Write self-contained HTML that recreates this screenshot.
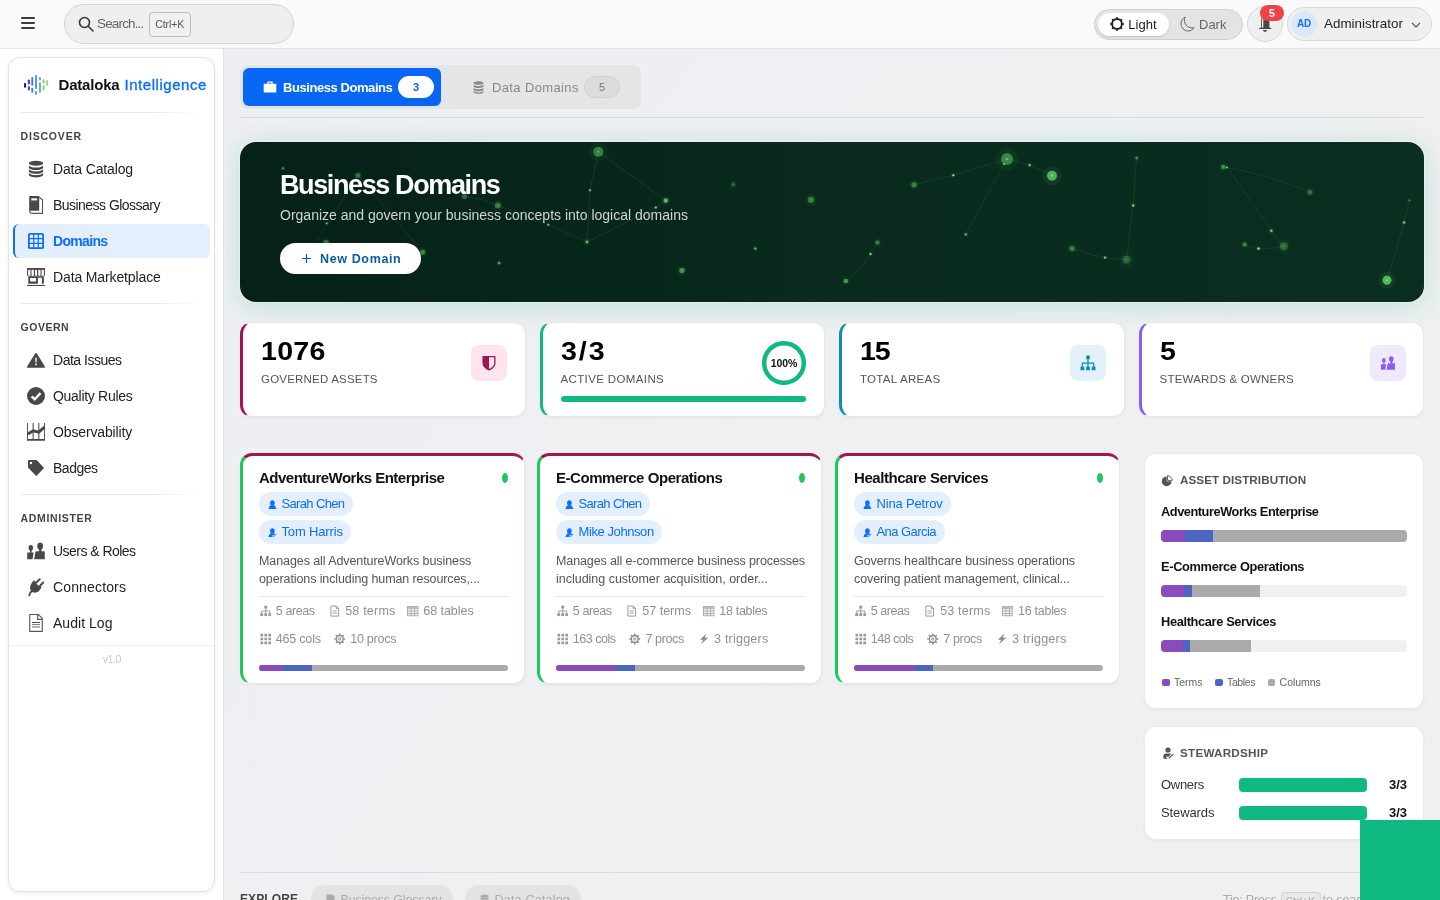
<!DOCTYPE html>
<html lang="en">
<head>
<meta charset="utf-8">
<title>Dataloka Intelligence - Domains</title>
<style>
*{box-sizing:border-box;margin:0;padding:0}
html,body{width:1440px;height:900px;overflow:hidden}
body{font-family:"Liberation Sans",sans-serif;background:linear-gradient(125deg,#edeff2 0%,#eef0f2 62%,#f0f0f0 100%);color:#212529;position:relative;font-size:14px}
svg{display:block}
#topbar,#sidewrap,#main{will-change:transform}
.abs{position:absolute}
/* top bar */
#topbar{position:absolute;left:0;top:0;width:1440px;height:49px;background:#fafafa;border-bottom:1px solid #e3e5e8}
#burger{position:absolute;left:21px;top:16.800px;width:14px;height:14px}
#burger i{display:block;height:1.800px;background:#3c3c3c;margin-bottom:3.200px;border-radius:1px}
#search{position:absolute;left:64px;top:4px;width:230px;height:40px;border:1px solid #d3d3d3;border-radius:20px;background:#efefef}
#search .txt{position:absolute;left:32px;top:11px;color:#666;white-space:nowrap;font-size:13.5px;letter-spacing:-0.843px}
#search kbd{position:absolute;left:83.500px;top:6.600px;width:42.500px;height:25px;border:1px solid #bdbdbd;border-radius:4px;font-family:"Liberation Sans",sans-serif;color:#555;text-align:center;line-height:23px;background:#f1f1f1;font-size:10.5px;letter-spacing:-0.085px}
#theme{position:absolute;left:1094px;top:9px;width:149px;height:31px;border:1px solid #cfcfcf;border-radius:16px;background:#e4e4e4}
#theme .on{position:absolute;left:3px;top:3px;width:71px;height:23px;border-radius:12px;background:#fff;box-shadow:0 1px 2px rgba(0,0,0,.15)}
#theme span{position:absolute;top:7px;font-size:13px}
#bell{position:absolute;left:1247px;top:6px;width:36px;height:36px;border:1px solid #d6d6d6;border-radius:18px;background:#efefef}
#bell .badge{position:absolute;left:12px;top:-2.300px;width:24px;height:16.400px;border-radius:8.200px;background:#ee4344;color:#fff;font-size:10.500px;font-weight:bold;text-align:center;line-height:16.400px}
#user{position:absolute;left:1287px;top:7px;width:145px;height:34px;border:1px solid #d9d9d9;border-radius:18px;background:#efefef}
#user .av{position:absolute;left:3px;top:3px;width:26px;height:26px;border-radius:13px;background:#dbe7fb;color:#0d6efd;font-size:10px;font-weight:bold;text-align:center;line-height:26px;letter-spacing:-.3px}
#user .nm{position:absolute;left:36px;top:8px;font-size:13.4px;color:#222}
/* sidebar */
#sidewrap{position:absolute;left:0;top:49px;width:224px;height:851px;background:#fff;border-right:1px solid #e1e3e6}
#side{position:absolute;left:7.5px;top:8px;width:207px;height:835px;border:1px solid #e4e4e4;border-radius:12px;background:#fff;box-shadow:0 1px 4px rgba(0,0,0,.08)}
#side .brand{position:absolute;left:0;top:0;width:100%;height:56px}
#side .brand b{position:absolute;left:50px;top:19px;font-size:15px;color:#111;white-space:nowrap}
#side .brand b.int{left:116px;color:#0d6efd;font-weight:normal;-webkit-text-stroke:.35px #0d6efd}
#side .inner{position:absolute;left:0;top:-1px;width:100%;height:100%}
#side hr{position:absolute;left:12px;width:180px;border:0;height:1px;background:linear-gradient(90deg,#e6e6e6,#e6e6e6 70%,rgba(230,230,230,0))}
#side h6{position:absolute;left:12px;font-size:11px;letter-spacing:.8px;color:#444;font-weight:bold}
#side .it{position:absolute;left:4px;width:197px;height:34px;border-radius:6px;font-size:14px;color:#222}
#side .it span{position:absolute;left:40.5px;top:9px;white-space:nowrap}
#side .it.act span{left:38.5px}
#side .it.act svg{left:11.500px}
#side .it svg{position:absolute;left:13.500px;top:7px;width:20px;height:20px}
#side .it.act{background:#e3effd;color:#0d6efd;border-left:2px solid #0d6efd;font-weight:bold}
#side .full{position:absolute;left:0;width:100%;height:1px;background:#f0f0f0}
#side .ver{position:absolute;left:1px;width:100%;text-align:center;font-size:10px;color:#c6c6c6;letter-spacing:-.2px}
/* main */
#main{position:absolute;left:225px;top:49px;width:1215px;height:851px;overflow:hidden}

#tabs{position:absolute;left:15px;top:16px;width:401px;height:44px;background:#e3e5e7;border-radius:8px}
.tab{position:absolute;top:3px;height:38px;border-radius:6px;font-size:13px}
.tab span{position:absolute;top:12px;white-space:nowrap}
.tab.on{left:3px;width:198px;background:#0866f5;color:#fff;font-weight:bold}
.tab.off{left:203px;width:195px;color:#888}
.tab em{position:absolute;top:8px;width:36px;height:22px;border-radius:11px;font-style:normal;font-size:11px;font-weight:bold;text-align:center;line-height:22px}
.tab.on em{left:155px;background:#fff;color:#0866f5}
.tab.off em{left:141px;background:#dadcde;color:#777;border:1px solid #cfd1d3;line-height:20px;font-weight:normal}
.hline{position:absolute;left:15px;width:1184px;height:1px;background:#d9dbde}
#hero{position:absolute;left:15px;top:93px;width:1184px;height:160px;border-radius:16px;background:linear-gradient(90deg,#062118,#092a1d 50%,#0a2e1f);overflow:hidden;box-shadow:0 0 0 1px rgba(255,255,255,.35),0 4px 28px rgba(16,150,120,.2)}
#hero h1{position:absolute;left:40px;top:28.400px;font-size:27px;font-weight:bold;color:#fff;letter-spacing:-1.1px;white-space:nowrap}
#hero p{position:absolute;left:40px;top:65px;font-size:14px;color:#cfd6d2;white-space:nowrap}
#hero .btn{position:absolute;left:40px;top:101px;width:141px;height:31px;border-radius:16px;background:#fff;color:#0a5c9e;font-size:13px;font-weight:bold}
#hero .btn span{position:absolute;left:40px;top:8.500px;white-space:nowrap}
#hero .btn .pl{left:21px;top:6px;font-weight:normal;font-size:15px}
.scard{position:absolute;top:273px;width:285.500px;height:95px;background:#fff;border-radius:12px;border:1px solid #e6e7e8;border-left:3px solid #000;box-shadow:0 1px 3px rgba(0,0,0,.05)}
.scard .num{position:absolute;left:18px;top:13px;font-size:26px;font-weight:bold;color:#000;white-space:nowrap}
.scard .lbl{position:absolute;left:18px;top:50px;font-size:11.500px;color:#555;letter-spacing:.6px;white-space:nowrap}
.scard .ib{position:absolute;left:228px;top:22px;width:36px;height:36px;border-radius:8px;display:flex;align-items:center;justify-content:center}
.scard .pbar{position:absolute;left:18px;top:73px;width:245px;height:6px;border-radius:3px;background:#10b981}
.dcard{position:absolute;top:404px;width:285px;height:231px;background:#fff;border-radius:12px;border:1px solid #e6e7e8;border-top:3px solid #a3154f;border-left:3px solid #22c55e;box-shadow:0 1px 3px rgba(0,0,0,.05)}
.dcard .tt{position:absolute;left:16px;top:13px;font-size:15px;font-weight:bold;color:#111;white-space:nowrap;letter-spacing:-.3px}
.dcard .dot{position:absolute;left:259px;top:17px;width:6px;height:10px;border-radius:50%;background:#22c55e}
.dcard .chips{position:absolute;left:16px;top:36px}
.chip{display:block;position:relative;height:23.500px;border-radius:12px;background:#e3effd;color:#0d6efd;font-size:13px;margin-bottom:4.500px;white-space:nowrap}
.chip span{position:absolute;left:22.500px;top:4px;line-height:15px}
.chip svg{position:absolute;left:9px;top:7.500px;width:9px;height:10px}
.dcard .desc{position:absolute;left:16px;top:95.600px;font-size:12.500px;line-height:18px;color:#555;white-space:nowrap}
.dcard .sep{position:absolute;left:16px;top:140px;width:249px;height:1px;background:#e8e8e8}
.dcard .row{position:absolute;left:16px;height:16px;white-space:nowrap;font-size:13px;color:#909090}
.st{display:block;position:absolute;top:0;padding-left:16.800px;line-height:16px}
.st i{font-style:normal}
.st svg{position:absolute;left:.5px;top:2px;width:11.500px;height:12px}
.dcard .bar{position:absolute;left:16px;top:209px;width:249px;height:6px;border-radius:3px;background:#aaa;overflow:hidden;font-size:0;white-space:nowrap}
.dcard .bar i{display:inline-block;height:6px}
.panel{position:absolute;left:919px;width:280px;background:#fff;border:1px solid #e9e9e9;border-radius:12px;box-shadow:0 1px 3px rgba(0,0,0,.05)}
.panel .ph{position:absolute;left:35px;font-size:12px;font-weight:bold;color:#555;letter-spacing:.5px;white-space:nowrap}
.panel .dn{position:absolute;left:16px;font-size:13px;font-weight:bold;color:#111;white-space:nowrap;letter-spacing:-.2px}
.panel .db{position:absolute;left:16px;width:246px;height:12px;border-radius:4px;background:#f0f0f0;overflow:hidden;font-size:0;white-space:nowrap}
.panel .db i{display:inline-block;height:12px}
.panel .lg{position:absolute;top:222px;font-size:10.500px;color:#666;padding-left:12px;white-space:nowrap}
.panel .lg b{position:absolute;left:0;top:2.500px;width:7.500px;height:7.500px;border-radius:2px}
.panel .sw{position:absolute;left:16px;width:246px;height:16px;font-size:13px;color:#333}
.panel .sw span{position:absolute;left:0;top:0;white-space:nowrap}
.panel .sw i{position:absolute;left:78px;top:1px;width:128px;height:14px;border-radius:4px;background:#10b981}
.panel .sw b{position:absolute;right:0;top:0;color:#111}
.exp{position:absolute;left:15px;top:843px;font-size:12px;color:#444;font-weight:bold;white-space:nowrap}
.echip{position:absolute;top:836px;height:28px;border-radius:14px;background:#e2e3e5;color:#aaa;font-size:13px}
.echip svg{position:absolute;left:15px;top:9px}
.echip span{position:absolute;left:29.500px;top:7.500px;white-space:nowrap}
.tip{position:absolute;top:843.500px;font-size:12.500px;color:#aaa;white-space:nowrap}
.tipk{position:absolute;left:1055.500px;top:842.500px;width:40px;height:20px;font-size:10.500px;color:#aaa;border:1px solid #d0d0d0;border-radius:4px;background:#e9e9e9;text-align:center;line-height:16px}
#fab{position:absolute;left:1135px;top:771px;width:80px;height:80px;background:#10b981}

</style>
</head>
<body>
<div id="topbar">
  <div id="burger"><i></i><i></i><i></i></div>
  <div id="search">
    <svg class="abs" style="left:13px;top:11px" width="16" height="16" viewBox="0 0 16 16" fill="none" stroke="#333" stroke-width="1.6"><circle cx="6.5" cy="6.5" r="5"/><path d="M10.2 10.2 15 15" stroke-linecap="round"/></svg>
    <div class="txt">Search...</div><kbd>Ctrl+K</kbd>
  </div>
  <div id="theme"><div class="on"></div>
    <svg class="abs" style="left:14px;top:5.600px" width="16" height="16" viewBox="0 0 16 16" fill="none" stroke="#222"><circle cx="8" cy="8" r="4.900" stroke-width="2"/><path d="M8 1.200v1.500M8 13.300v1.500M1.200 8h1.500M13.300 8h1.500M3.200 3.200l1.100 1.100M11.700 11.700l1.100 1.100M3.200 12.800l1.100-1.100M11.700 4.300l1.100-1.100" stroke-width="1.900"/></svg>
    <span style="left:33.300px;color:#222">Light</span>
    <svg class="abs" style="left:85px;top:6px" width="15" height="16" viewBox="0 0 15 16" fill="none" stroke="#666" stroke-width="1"><path d="M5.300 1C2.500 2.300 1 5 1 7.800c0 4 3.200 7.200 7.200 7.200 2.600 0 4.700-1.300 5.800-3.400-4.600 1.400-9.700-2.300-9.700-7.600 0-1 .3-2 1-3z" stroke-linejoin="round"/></svg>
    <span style="left:104px;color:#666">Dark</span>
  </div>
  <div id="bell">
    <svg class="abs" style="left:8px;top:8px" width="20" height="20" viewBox="1256 15 20 20"><path d="M1261 28v-7.500c0-2.500 1.800-4 4.200-4s4.200 1.500 4.200 4v7.500z" fill="#484848"/><path d="M1261.900 27.700v-7.400c0-1.200.5-2.200 1.400-2.800v10.200z" fill="#f4f4f4"/><path d="M1258.900 28.900q.2-1.200 1.600-1.200h9.400q1.400 0 1.600 1.200z" fill="#484848"/><path d="M1262.800 30.100h4.400q-.4 1.800-2.200 1.800t-2.200-1.800z" fill="#484848"/></svg>
    <div class="badge">5</div>
  </div>
  <div id="user"><div class="av">AD</div><div class="nm">Administrator</div>
    <svg class="abs" style="left:123px;top:13px" width="10" height="8" viewBox="0 0 10 8" fill="none" stroke="#555" stroke-width="1.1"><path d="M1 2l4 4 4-4"/></svg>
  </div>
</div>


<div id="sidewrap"><div id="side"><div class="inner">
  <div class="brand">
    <svg class="abs" style="left:13.500px;top:15px" width="28" height="26" viewBox="22 72 28 26"><rect x="24.05" y="82.9" width="1.950" height="4.9" rx=".8" fill="#250aa0"/><rect x="27.90" y="79.5" width="1.950" height="5.1" rx=".8" fill="#3344c4"/><rect x="27.90" y="86.3" width="1.950" height="4.2" rx=".8" fill="#3344c4"/><rect x="31.30" y="77.1" width="1.950" height="8.7" rx=".8" fill="#4a78e0"/><rect x="31.30" y="87.8" width="1.950" height="4.9" rx=".8" fill="#4a78e0"/><rect x="35.05" y="75.0" width="1.950" height="14.0" rx=".8" fill="#479af5"/><rect x="35.05" y="91.0" width="1.950" height="3.8" rx=".8" fill="#479af5"/><rect x="39.00" y="77.1" width="1.950" height="3.4" rx=".8" fill="#5fb0c0"/><rect x="39.00" y="82.2" width="1.950" height="10.5" rx=".8" fill="#5fb0c0"/><rect x="42.65" y="79.3" width="1.950" height="4.2" rx=".8" fill="#86cc8c"/><rect x="42.65" y="85.2" width="1.950" height="5.3" rx=".8" fill="#86cc8c"/><rect x="46.15" y="80.3" width="1.950" height="5.5" rx=".8" fill="#a0dc50"/></svg>
    <b style="font-size:15px;letter-spacing:-0.190px">Dataloka</b><b class="int" style="font-size:15px;letter-spacing:0.547px">Intelligence</b>
  </div>
  <hr style="top:55px">
  <h6 style="top:73px;font-size:10.5px;letter-spacing:0.814px">DISCOVER</h6>
  <div class="it" style="top:95px"><svg viewBox="0 0 20 20" fill="#484848"><ellipse cx="10" cy="4.200" rx="7.150" ry="2.550"/><path d="M2.850 6c0 1.500 3.200 2.600 7.150 2.600s7.150-1.100 7.150-2.600v2.500c0 1.500-3.200 2.600-7.150 2.600s-7.150-1.100-7.150-2.600z"/><path d="M2.850 9.800c0 1.500 3.200 2.600 7.150 2.600s7.150-1.100 7.150-2.600v2.500c0 1.500-3.200 2.600-7.150 2.600s-7.150-1.100-7.150-2.600z"/><path d="M2.850 13.600c0 1.500 3.200 2.600 7.150 2.600s7.150-1.100 7.150-2.600v2.200c0 1.500-3.200 2.600-7.150 2.600s-7.150-1.100-7.150-2.600z"/></svg><span style="font-size:14px;letter-spacing:-0.145px">Data Catalog</span></div>
  <div class="it" style="top:131px"><svg viewBox="0 0 20 20"><path d="M3.200 1.700a.6.6 0 0 1 .6-.6h8.800a.6.6 0 0 1 .6.600v14h-10z" fill="#484848"/><rect x="5.300" y="3.400" width="5.800" height="2" fill="#fff"/><path d="M13.200 1.800c.6 1.600 1.600 2.400 3.300 2.700v13.900h-9.700c-2 0-3.100-1-3.100-3" fill="none" stroke="#555" stroke-width="1.100"/></svg><span style="font-size:14px;letter-spacing:-0.532px">Business Glossary</span></div>
  <div class="it act" style="top:167px"><svg viewBox="0 0 20 20"><rect x="2" y="2" width="16" height="16" rx="1.800" fill="#0d6efd"/><path d="M3.800 3.800h3.300v3.300h-3.300zM8.350 3.800h3.300v3.300h-3.300zM12.900 3.800h3.300v3.300h-3.300zM3.800 8.350h3.300v3.300h-3.300zM8.350 8.350h3.300v3.300h-3.300zM12.900 8.350h3.300v3.300h-3.300zM3.800 12.900h3.300v3.300h-3.300zM8.350 12.900h3.300v3.300h-3.300zM12.900 12.900h3.300v3.300h-3.300z" fill="#e3effd"/></svg><span style="font-size:14px;letter-spacing:-0.667px">Domains</span></div>
  <div class="it" style="top:203px"><svg viewBox="0 0 20 20"><path d="M1.070 1h17.830v7a1.300 1.300 0 0 1-1.300 1.300h-15.230a1.300 1.300 0 0 1-1.300-1.300z" fill="#484848"/><g fill="#fff"><rect x="2.130" y="2.800" width="2" height="6.100" rx=".9"/><rect x="5.730" y="2.800" width="2.140" height="6.100" rx=".9"/><rect x="9.070" y="2.800" width="2" height="6.100" rx=".9"/><rect x="12.270" y="2.800" width="2" height="6.100" rx=".9"/><rect x="15.870" y="2.800" width="2" height="6.100" rx=".9"/></g><path d="M4.130 2.800h1.600v6h-1.600zM14.270 2.800h1.600v6h-1.600z" fill="#fff" fill-opacity=".4"/><path d="M2.270 9.300h15.600v7.430h-2v-5.860h-4v5.860h-9.600zM4.130 11h5.870v3.600h-5.870z" fill="#484848" fill-rule="evenodd"/><rect x="1.070" y="17.930" width="17.830" height="1.070" fill="#484848"/></svg><span style="font-size:14px;letter-spacing:-0.126px">Data Marketplace</span></div>
  <hr style="top:246px">
  <h6 style="top:264px;font-size:10.5px;letter-spacing:0.527px">GOVERN</h6>
  <div class="it" style="top:286px"><svg viewBox="0 0 20 20"><path d="M10 2.900a.8.800 0 0 1 .7.400l8.200 13.300a.8.800 0 0 1-.7 1.200h-16.400a.8.800 0 0 1-.7-1.200l8.200-13.300a.8.800 0 0 1 .7-.4z" fill="#484848"/><path d="M9.200 7.700h1.600l-.25 4.700h-1.100zM9.150 13.600h1.700v1.700h-1.700z" fill="#fff"/></svg><span style="font-size:14px;letter-spacing:-0.480px">Data Issues</span></div>
  <div class="it" style="top:322px"><svg viewBox="0 0 20 20"><circle cx="10" cy="10" r="9" fill="#484848"/><path d="M5.600 10.300l3.100 3 5.800-6.200" fill="none" stroke="#fff" stroke-width="2.300"/></svg><span style="font-size:14px;letter-spacing:-0.295px">Quality Rules</span></div>
  <div class="it" style="top:358px"><svg viewBox="0 0 20 20"><path d="M1.070 .9h.95v16.100h16v-16.100h.9v17.900h-17.850z" fill="#484848"/><path d="M6.500 .9h1.400v16.200h-1.400zM12.050 .9h1.400v16.200h-1.400z" fill="#777"/><path d="M1.900 12.100 7.200 8.800l5.600 1.400 5.600-5" fill="none" stroke="#484848" stroke-width="2.900"/></svg><span style="font-size:14px;letter-spacing:-0.141px">Observability</span></div>
  <div class="it" style="top:394px"><svg viewBox="0 0 20 20"><path d="M2 3a.9.900 0 0 1 .9-.9h7.300a.9.900 0 0 1 .6.250l6.700 6.900a.9.900 0 0 1 0 1.250l-6.500 6.900a.9.900 0 0 1-1.300 0l-7.450-7.600a.9.900 0 0 1-.25-.6z" fill="#484848"/><circle cx="5" cy="5.100" r="1.250" fill="#fff"/></svg><span style="font-size:14px;letter-spacing:-0.493px">Badges</span></div>
  <hr style="top:437px">
  <h6 style="top:455px;font-size:10.5px;letter-spacing:0.667px">ADMINISTER</h6>
  <div class="it" style="top:477px"><svg viewBox="0 0 20 20" fill="#484848"><ellipse cx="4.800" cy="6.800" rx="2.250" ry="2.900"/><path d="M4.100 9h1.450v2.500h2.050l-1.050 6.800h-5.350v-6.800h2.900z"/><ellipse cx="14.130" cy="5.100" rx="2.900" ry="3.650"/><path d="M13.070 8h2.400v2.300h2.300a1 1 0 0 1 1 1v7h-10.650l1.300-7.200a1.200 1.200 0 0 1 1.150-.800h2.500z"/></svg><span style="font-size:14px;letter-spacing:-0.537px">Users &amp; Roles</span></div>
  <div class="it" style="top:513px"><svg viewBox="0 -.8 20 20"><path d="M3.100 18.300c.3-2 1.100-3.800 2.600-5.300" stroke="#484848" stroke-width="1.900" fill="none"/><path d="M7.300 3.300l.9-.9 1.300 1.300-.6.600 4.900 4.900.6-.6 1.300 1.300-.9.900c-1.300 3-4.700 5-8 3.600-3-1.300-3.500-5.400-1.600-8.300.6-1 1.300-1.900 2.100-2.800z" fill="#484848"/><path d="M10 5l3.700-3.500M13.600 8.400l3.600-3.700" stroke="#484848" stroke-width="2" fill="none" stroke-linecap="round"/></svg><span style="font-size:14px;letter-spacing:0.147px">Connectors</span></div>
  <div class="it" style="top:549px"><svg viewBox="0 0 20 20" fill="none"><path d="M3.750 1.500h8.600l3.900 3.900v13h-12.500z" stroke="#555" stroke-width="1.100" stroke-linejoin="round"/><path d="M11.600 1.600v4.800h4.700" stroke="#555" stroke-width="1.100"/><path d="M6 9.500h8" stroke="#444" stroke-width="1"/><path d="M6 11.600h8" stroke="#777" stroke-width="1"/><path d="M6 14h8" stroke="#aaa" stroke-width="1.800"/></svg><span style="font-size:14px;letter-spacing:0.033px">Audit Log</span></div>
  <div class="full" style="top:588px"></div>
  <div class="ver" style="top:597.400px">v1.0</div>
</div></div></div>


<div id="main">
  <div id="tabs">
    <div class="tab on">
      <svg class="abs" style="left:20px;top:12px" width="14" height="14" viewBox="0 0 14 14" fill="#fff"><path d="M.7 3.700h12.600v8.800h-12.600zM4.300 3.700v-2.200h5.400v2.200h-1.300v-1h-2.800v1z"/></svg>
      <span style="left:40px;font-size:13px;letter-spacing:-0.432px">Business Domains</span><em>3</em>
    </div>
    <div class="tab off">
      <svg class="abs" style="left:30px;top:13px" width="11" height="13" viewBox="0 0 11 13" fill="#8a8a8a"><ellipse cx="5.500" cy="2" rx="5" ry="1.800"/><path d="M.5 3.200c0 1 2.200 1.800 5 1.800s5-.8 5-1.800v2c0 1-2.200 1.800-5 1.800s-5-.8-5-1.800zM.5 6.400c0 1 2.200 1.800 5 1.800s5-.8 5-1.800v2c0 1-2.200 1.800-5 1.800s-5-.8-5-1.800zM.5 9.600c0 1 2.200 1.800 5 1.800s5-.8 5-1.800v1.400c0 1-2.200 1.800-5 1.800s-5-.8-5-1.800z"/></svg>
      <span style="left:49px;font-size:13px;letter-spacing:0.370px">Data Domains</span><em>5</em>
    </div>
  </div>
  <div class="hline" style="top:68px"></div>

  <div id="hero">
    <svg class="abs" style="left:0;top:0" width="1184" height="160" viewBox="240 142 1184 160">
<g fill="none" stroke="#5fbf6a" stroke-opacity=".17" stroke-width=".8">
<path d="M358 175.300 L316 242"/>
<path d="M358 175.300 L422.800 252.200"/>
<path d="M464.400 196.400 Q482 198 497.800 205.500 L548.300 224.700 L587 242"/>
<path d="M598.300 151.700 L590 190.300 L587 242"/>
<path d="M598.300 151.700 L665.800 200.600 L655.800 207.500 L587 242"/>
<path d="M914 184.700 L953.300 175.300 L1007 159"/>
<path d="M1004 164 L965.800 234.400"/>
<path d="M877.500 242.500 L870.500 254 Q860 270 845.800 281"/>
<path d="M1007 159 Q1030 164 1052 175.700"/>
<path d="M1136.600 158 L1133.200 205.400 L1126.500 259.800"/>
<path d="M1072 248.500 Q1090 255 1105 257.600 L1126.500 259.800"/>
<path d="M1223.300 166.900 Q1270 175 1310 192.200"/>
<path d="M1227 167.500 L1271.300 230.700 L1283.800 246.300"/>
<path d="M1244.700 244.500 Q1252 248 1258.500 248.500 Q1272 249 1283.800 246.300"/>
<path d="M1409.400 200.200 L1404 222.500 Q1396 252 1387 280.200"/>
</g>
<circle cx="283" cy="168.3" r="3.0" fill="#4caf50" fill-opacity="0.05"/>
<circle cx="283" cy="168.3" r="1.6" fill="#52b85a" fill-opacity="0.37"/>
<circle cx="283" cy="168.3" r="0.8" fill="#c8f5c0" fill-opacity="0.35"/>
<circle cx="358" cy="175.3" r="4.9" fill="#4caf50" fill-opacity="0.06"/>
<circle cx="358" cy="175.3" r="2.6" fill="#52b85a" fill-opacity="0.47"/>
<circle cx="358" cy="175.3" r="0.6" fill="#a8e6a8" fill-opacity="0.36"/>
<circle cx="464.4" cy="196.4" r="4.9" fill="#4caf50" fill-opacity="0.05"/>
<circle cx="464.4" cy="196.4" r="2.6" fill="#52b85a" fill-opacity="0.42"/>
<circle cx="464.4" cy="196.4" r="0.6" fill="#a8e6a8" fill-opacity="0.32"/>
<circle cx="497.8" cy="205.5" r="5.7" fill="#4caf50" fill-opacity="0.07"/>
<circle cx="497.8" cy="205.5" r="3.0" fill="#52b85a" fill-opacity="0.53"/>
<circle cx="497.8" cy="205.5" r="0.7" fill="#a8e6a8" fill-opacity="0.40"/>
<circle cx="598.3" cy="151.7" r="9.5" fill="#4caf50" fill-opacity="0.07"/>
<circle cx="598.3" cy="151.7" r="5.0" fill="#52b85a" fill-opacity="0.58"/>
<circle cx="598.3" cy="151.7" r="1.1" fill="#a8e6a8" fill-opacity="0.44"/>
<circle cx="590" cy="190.3" r="2.3" fill="#4caf50" fill-opacity="0.09"/>
<circle cx="590" cy="190.3" r="1.2" fill="#52b85a" fill-opacity="0.73"/>
<circle cx="590" cy="190.3" r="0.6" fill="#c8f5c0" fill-opacity="0.70"/>
<circle cx="548.3" cy="224.7" r="2.3" fill="#4caf50" fill-opacity="0.09"/>
<circle cx="548.3" cy="224.7" r="1.2" fill="#52b85a" fill-opacity="0.73"/>
<circle cx="548.3" cy="224.7" r="0.6" fill="#c8f5c0" fill-opacity="0.70"/>
<circle cx="587" cy="242" r="3.2" fill="#4caf50" fill-opacity="0.09"/>
<circle cx="587" cy="242" r="1.7" fill="#52b85a" fill-opacity="0.73"/>
<circle cx="587" cy="242" r="0.8" fill="#c8f5c0" fill-opacity="0.70"/>
<circle cx="326.7" cy="223.3" r="2.3" fill="#4caf50" fill-opacity="0.08"/>
<circle cx="326.7" cy="223.3" r="1.2" fill="#52b85a" fill-opacity="0.63"/>
<circle cx="326.7" cy="223.3" r="0.6" fill="#c8f5c0" fill-opacity="0.60"/>
<circle cx="326" cy="242.5" r="5.3" fill="#4caf50" fill-opacity="0.06"/>
<circle cx="326" cy="242.5" r="2.8" fill="#52b85a" fill-opacity="0.47"/>
<circle cx="326" cy="242.5" r="0.6" fill="#a8e6a8" fill-opacity="0.36"/>
<circle cx="422.8" cy="252.2" r="4.9" fill="#4caf50" fill-opacity="0.07"/>
<circle cx="422.8" cy="252.2" r="2.6" fill="#52b85a" fill-opacity="0.58"/>
<circle cx="422.8" cy="252.2" r="0.6" fill="#a8e6a8" fill-opacity="0.44"/>
<circle cx="499" cy="263" r="2.8" fill="#4caf50" fill-opacity="0.08"/>
<circle cx="499" cy="263" r="1.5" fill="#52b85a" fill-opacity="0.63"/>
<circle cx="499" cy="263" r="0.8" fill="#c8f5c0" fill-opacity="0.60"/>
<circle cx="665.8" cy="200.6" r="4.4" fill="#4caf50" fill-opacity="0.12"/>
<circle cx="665.8" cy="200.6" r="2.3" fill="#52b85a" fill-opacity="0.95"/>
<circle cx="665.8" cy="200.6" r="0.6" fill="#a8e6a8" fill-opacity="0.72"/>
<circle cx="655.8" cy="207.5" r="2.3" fill="#4caf50" fill-opacity="0.10"/>
<circle cx="655.8" cy="207.5" r="1.2" fill="#52b85a" fill-opacity="0.84"/>
<circle cx="655.8" cy="207.5" r="0.6" fill="#c8f5c0" fill-opacity="0.80"/>
<circle cx="733.3" cy="184.4" r="4.2" fill="#4caf50" fill-opacity="0.05"/>
<circle cx="733.3" cy="184.4" r="2.2" fill="#52b85a" fill-opacity="0.37"/>
<circle cx="733.3" cy="184.4" r="0.6" fill="#a8e6a8" fill-opacity="0.28"/>
<circle cx="811" cy="199.7" r="6.3" fill="#4caf50" fill-opacity="0.07"/>
<circle cx="811" cy="199.7" r="3.3" fill="#52b85a" fill-opacity="0.53"/>
<circle cx="811" cy="199.7" r="0.7" fill="#a8e6a8" fill-opacity="0.40"/>
<circle cx="755.3" cy="248.6" r="3.0" fill="#4caf50" fill-opacity="0.07"/>
<circle cx="755.3" cy="248.6" r="1.6" fill="#52b85a" fill-opacity="0.53"/>
<circle cx="755.3" cy="248.6" r="0.8" fill="#c8f5c0" fill-opacity="0.50"/>
<circle cx="682" cy="270.5" r="5.3" fill="#4caf50" fill-opacity="0.08"/>
<circle cx="682" cy="270.5" r="2.8" fill="#52b85a" fill-opacity="0.68"/>
<circle cx="682" cy="270.5" r="0.6" fill="#a8e6a8" fill-opacity="0.52"/>
<circle cx="914" cy="184.7" r="5.3" fill="#4caf50" fill-opacity="0.07"/>
<circle cx="914" cy="184.7" r="2.8" fill="#52b85a" fill-opacity="0.53"/>
<circle cx="914" cy="184.7" r="0.6" fill="#a8e6a8" fill-opacity="0.40"/>
<circle cx="953.3" cy="175.3" r="2.5" fill="#4caf50" fill-opacity="0.10"/>
<circle cx="953.3" cy="175.3" r="1.3" fill="#52b85a" fill-opacity="0.84"/>
<circle cx="953.3" cy="175.3" r="0.7" fill="#c8f5c0" fill-opacity="0.80"/>
<circle cx="1007" cy="159" r="11.4" fill="#4caf50" fill-opacity="0.08"/>
<circle cx="1007" cy="159" r="6.0" fill="#52b85a" fill-opacity="0.63"/>
<circle cx="1007" cy="159" r="1.3" fill="#a8e6a8" fill-opacity="0.48"/>
<circle cx="1004" cy="164" r="1.9" fill="#4caf50" fill-opacity="0.12"/>
<circle cx="1004" cy="164" r="1.0" fill="#52b85a" fill-opacity="0.95"/>
<circle cx="1004" cy="164" r="0.5" fill="#c8f5c0" fill-opacity="0.90"/>
<circle cx="965.8" cy="234.4" r="3.0" fill="#4caf50" fill-opacity="0.07"/>
<circle cx="965.8" cy="234.4" r="1.6" fill="#52b85a" fill-opacity="0.53"/>
<circle cx="965.8" cy="234.4" r="0.8" fill="#c8f5c0" fill-opacity="0.50"/>
<circle cx="877.5" cy="242.5" r="4.4" fill="#4caf50" fill-opacity="0.07"/>
<circle cx="877.5" cy="242.5" r="2.3" fill="#52b85a" fill-opacity="0.53"/>
<circle cx="877.5" cy="242.5" r="0.6" fill="#a8e6a8" fill-opacity="0.40"/>
<circle cx="870.5" cy="254" r="2.5" fill="#4caf50" fill-opacity="0.11"/>
<circle cx="870.5" cy="254" r="1.3" fill="#52b85a" fill-opacity="0.89"/>
<circle cx="870.5" cy="254" r="0.7" fill="#c8f5c0" fill-opacity="0.85"/>
<circle cx="845.8" cy="281" r="4.4" fill="#4caf50" fill-opacity="0.09"/>
<circle cx="845.8" cy="281" r="2.3" fill="#52b85a" fill-opacity="0.73"/>
<circle cx="845.8" cy="281" r="0.6" fill="#a8e6a8" fill-opacity="0.56"/>
<circle cx="1029.6" cy="165" r="2.5" fill="#4caf50" fill-opacity="0.10"/>
<circle cx="1029.6" cy="165" r="1.3" fill="#52b85a" fill-opacity="0.84"/>
<circle cx="1029.6" cy="165" r="0.7" fill="#c8f5c0" fill-opacity="0.80"/>
<circle cx="1052" cy="175.7" r="9.5" fill="#4caf50" fill-opacity="0.12"/>
<circle cx="1052" cy="175.7" r="5.0" fill="#52b85a" fill-opacity="0.95"/>
<circle cx="1052" cy="175.7" r="1.1" fill="#a8e6a8" fill-opacity="0.72"/>
<circle cx="1136.6" cy="158" r="3.4" fill="#4caf50" fill-opacity="0.05"/>
<circle cx="1136.6" cy="158" r="1.8" fill="#52b85a" fill-opacity="0.37"/>
<circle cx="1136.6" cy="158" r="0.9" fill="#c8f5c0" fill-opacity="0.35"/>
<circle cx="1133.2" cy="205.4" r="2.8" fill="#4caf50" fill-opacity="0.09"/>
<circle cx="1133.2" cy="205.4" r="1.5" fill="#52b85a" fill-opacity="0.73"/>
<circle cx="1133.2" cy="205.4" r="0.8" fill="#c8f5c0" fill-opacity="0.70"/>
<circle cx="1126.5" cy="259.8" r="7.6" fill="#4caf50" fill-opacity="0.05"/>
<circle cx="1126.5" cy="259.8" r="4.0" fill="#52b85a" fill-opacity="0.37"/>
<circle cx="1126.5" cy="259.8" r="0.9" fill="#a8e6a8" fill-opacity="0.28"/>
<circle cx="1105" cy="257.6" r="2.5" fill="#4caf50" fill-opacity="0.11"/>
<circle cx="1105" cy="257.6" r="1.3" fill="#52b85a" fill-opacity="0.89"/>
<circle cx="1105" cy="257.6" r="0.7" fill="#c8f5c0" fill-opacity="0.85"/>
<circle cx="1072" cy="248.5" r="5.1" fill="#4caf50" fill-opacity="0.07"/>
<circle cx="1072" cy="248.5" r="2.7" fill="#52b85a" fill-opacity="0.53"/>
<circle cx="1072" cy="248.5" r="0.6" fill="#a8e6a8" fill-opacity="0.40"/>
<circle cx="1223.3" cy="166.9" r="4.8" fill="#4caf50" fill-opacity="0.07"/>
<circle cx="1223.3" cy="166.9" r="2.5" fill="#52b85a" fill-opacity="0.58"/>
<circle cx="1223.3" cy="166.9" r="0.6" fill="#a8e6a8" fill-opacity="0.44"/>
<circle cx="1227" cy="167.5" r="1.9" fill="#4caf50" fill-opacity="0.12"/>
<circle cx="1227" cy="167.5" r="1.0" fill="#52b85a" fill-opacity="0.95"/>
<circle cx="1227" cy="167.5" r="0.5" fill="#c8f5c0" fill-opacity="0.90"/>
<circle cx="1310" cy="192.2" r="4.9" fill="#4caf50" fill-opacity="0.05"/>
<circle cx="1310" cy="192.2" r="2.6" fill="#52b85a" fill-opacity="0.42"/>
<circle cx="1310" cy="192.2" r="0.6" fill="#a8e6a8" fill-opacity="0.32"/>
<circle cx="1271.3" cy="230.7" r="2.8" fill="#4caf50" fill-opacity="0.10"/>
<circle cx="1271.3" cy="230.7" r="1.5" fill="#52b85a" fill-opacity="0.79"/>
<circle cx="1271.3" cy="230.7" r="0.8" fill="#c8f5c0" fill-opacity="0.75"/>
<circle cx="1283.8" cy="246.3" r="7.6" fill="#4caf50" fill-opacity="0.05"/>
<circle cx="1283.8" cy="246.3" r="4.0" fill="#52b85a" fill-opacity="0.42"/>
<circle cx="1283.8" cy="246.3" r="0.9" fill="#a8e6a8" fill-opacity="0.32"/>
<circle cx="1258.5" cy="248.5" r="2.8" fill="#4caf50" fill-opacity="0.11"/>
<circle cx="1258.5" cy="248.5" r="1.5" fill="#52b85a" fill-opacity="0.89"/>
<circle cx="1258.5" cy="248.5" r="0.8" fill="#c8f5c0" fill-opacity="0.85"/>
<circle cx="1244.7" cy="244.5" r="4.2" fill="#4caf50" fill-opacity="0.07"/>
<circle cx="1244.7" cy="244.5" r="2.2" fill="#52b85a" fill-opacity="0.58"/>
<circle cx="1244.7" cy="244.5" r="0.6" fill="#a8e6a8" fill-opacity="0.44"/>
<circle cx="1409.4" cy="200.2" r="1.9" fill="#4caf50" fill-opacity="0.07"/>
<circle cx="1409.4" cy="200.2" r="1.0" fill="#52b85a" fill-opacity="0.53"/>
<circle cx="1409.4" cy="200.2" r="0.5" fill="#c8f5c0" fill-opacity="0.50"/>
<circle cx="1404" cy="222.5" r="2.8" fill="#4caf50" fill-opacity="0.09"/>
<circle cx="1404" cy="222.5" r="1.5" fill="#52b85a" fill-opacity="0.73"/>
<circle cx="1404" cy="222.5" r="0.8" fill="#c8f5c0" fill-opacity="0.70"/>
<circle cx="1387" cy="280.2" r="8.5" fill="#4caf50" fill-opacity="0.12"/>
<circle cx="1387" cy="280.2" r="4.5" fill="#52b85a" fill-opacity="1.00"/>
<circle cx="1387" cy="280.2" r="1.0" fill="#a8e6a8" fill-opacity="0.76"/>
</svg>
    <h1 style="font-size:27px;letter-spacing:-1.388px">Business Domains</h1>
    <p style="font-size:14px;letter-spacing:0.002px">Organize and govern your business concepts into logical domains</p>
    <div class="btn"><svg class="abs" style="left:22px;top:11px" width="9" height="9" viewBox="0 0 9 9"><path d="M4.500 0v9M0 4.500h9" stroke="#0a5c9e" stroke-width="1.200"/></svg><span style="font-size:12.5px;letter-spacing:0.632px">New Domain</span></div>
  </div>

  <div class="scard" style="left:15px;border-left-color:#a3154f">
    <div class="num" style="font-size:26px;letter-spacing:0.201px;transform:scaleX(1.1);transform-origin:0 0">1076</div><div class="lbl" style="font-size:11.5px;letter-spacing:0.198px">GOVERNED ASSETS</div>
    <div class="ib" style="background:#fde4ee"><svg width="14" height="16" viewBox="0 0 14 16"><path d="M.5 1h13v7c0 3.500-3 6-6.500 7.500-3.500-1.500-6.500-4-6.500-7.500z" fill="#a3154f"/><path d="M7 2.300h5.200v5.700c0 2.700-2.300 4.700-5.200 6z" fill="#fde4ee"/></svg></div>
  </div>
  <div class="scard" style="left:314.500px;border-left-color:#10b981">
    <div class="num" style="font-size:26px;letter-spacing:1.741px;transform:scaleX(1.1);transform-origin:0 0">3/3</div><div class="lbl" style="font-size:11.5px;letter-spacing:0.371px">ACTIVE DOMAINS</div>
    <svg class="abs" style="left:218.500px;top:17px" width="46" height="46" viewBox="0 0 46 46"><circle cx="23" cy="23" r="19.800" fill="none" stroke="#10b981" stroke-width="4.500"/><text x="23" y="26.800" text-anchor="middle" font-family="Liberation Sans, sans-serif" font-size="10.500" font-weight="bold" fill="#111" letter-spacing="-.1">100%</text></svg>
    <div class="pbar"></div>
  </div>
  <div class="scard" style="left:614px;border-left-color:#0d8fb5">
    <div class="num" style="font-size:26px;letter-spacing:-1.113px;transform:scaleX(1.1);transform-origin:0 0">15</div><div class="lbl" style="font-size:11.5px;letter-spacing:0.300px">TOTAL AREAS</div>
    <div class="ib" style="background:#e2f2f8"><svg width="16" height="16" viewBox="0 0 16 16" fill="#0d8fb5"><rect x="6.200" y=".5" width="3.600" height="3.600"/><rect x=".5" y="11.500" width="3.800" height="3.800"/><rect x="6.100" y="11.500" width="3.800" height="3.800"/><rect x="11.700" y="11.500" width="3.800" height="3.800"/><path d="M8 4v7.500M2.400 11.500v-3.300h11.200v3.300" fill="none" stroke="#0d8fb5" stroke-width="1.300"/></svg></div>
  </div>
  <div class="scard" style="left:913.500px;border-left-color:#8b5cf6">
    <div class="num" style="font-size:26px;letter-spacing:-0.562px;transform:scaleX(1.1);transform-origin:0 0">5</div><div class="lbl" style="font-size:11.5px;letter-spacing:0.229px">STEWARDS &amp; OWNERS</div>
    <div class="ib" style="background:#f0e9fe"><svg width="16" height="16" viewBox="0 0 20 20" fill="#8b5cf6"><ellipse cx="4.800" cy="6.800" rx="2.250" ry="2.900"/><path d="M4.100 9h1.450v2.500h2.050l-1.050 6.800h-5.350v-6.800h2.900z"/><ellipse cx="14.130" cy="5.100" rx="2.900" ry="3.650"/><path d="M13.070 8h2.400v2.300h2.300a1 1 0 0 1 1 1v7h-10.650l1.300-7.200a1.200 1.200 0 0 1 1.150-.800h2.500z"/></svg></div>
  </div>

  
<div class="dcard" style="left:15px">
  <div class="tt" style="font-size:15px;letter-spacing:-0.513px">AdventureWorks Enterprise</div><div class="dot"></div>
  <div class="chips"><div class="chip" style="width:94.0px"><svg viewBox="0 0 9 10" fill="#0d6efd"><ellipse cx="4.400" cy="3" rx="2.300" ry="2.750"/><path d="M.4 9.100 1.500 6.400Q2 5.300 3.100 5.300h2.600Q6.800 5.300 7.300 6.400L8.400 9.100z"/></svg><span style="font-size:13px;letter-spacing:-0.649px">Sarah Chen</span></div><div class="chip" style="width:91.9px"><svg viewBox="0 0 9 10" fill="#0d6efd"><ellipse cx="4.400" cy="3" rx="2.300" ry="2.750"/><path d="M.4 9.100 1.500 6.400Q2 5.300 3.100 5.300h2.600Q6.800 5.300 7.300 6.400L7.600 7.100 5.700 9.100z"/><path d="M4.300 7.400l1.300 1.200 2.700-2.600" fill="none" stroke="#e3effd" stroke-width="1.500"/><path d="M4.500 7.500l1.100 1.100 2.700-2.700" fill="none" stroke="#0d6efd" stroke-width=".9"/></svg><span style="font-size:13px;letter-spacing:-0.155px">Tom Harris</span></div></div>
  <div class="desc"><span style="font-size:12.5px;letter-spacing:-0.084px">Manages all AdventureWorks business</span><br><span style="font-size:12.5px;letter-spacing:-0.106px">operations including human resources,...</span></div>
  <div class="sep"></div>
  <div class="row" style="top:147.200px"><span class="st" style="left:0.0px"><svg viewBox="0 0 12 12" fill="#999"><rect x="4.500" y=".5" width="3" height="3"/><rect x=".3" y="8.300" width="3" height="3"/><rect x="4.500" y="8.300" width="3" height="3"/><rect x="8.700" y="8.300" width="3" height="3"/><path d="M6 3.500v5M1.800 8.300v-2.300h8.400v2.300" fill="none" stroke="#999" stroke-width="1"/></svg><i style="font-size:12.6px;letter-spacing:-0.453px">5 areas</i></span><span class="st" style="left:69.4px"><svg viewBox="0 0 12 12" fill="none" stroke="#999" stroke-width="1"><path d="M2 .8h5.500l2.500 2.500v8h-8zM7.500.8v2.500h2.500"/><path d="M3.800 6h4.400M3.800 8.200h4.400" stroke-width=".9"/></svg><i style="font-size:12.6px;letter-spacing:0.170px">58 terms</i></span><span class="st" style="left:147.5px"><svg viewBox="0 0 12 12" fill="none" stroke="#a0a0a0" stroke-width=".9"><rect x=".6" y="1.200" width="10.800" height="9.800"/><path d="M.6 3.600h10.800M.6 6.100h10.800M.6 8.600h10.800M4.200 3.600v7.400M7.800 3.600v7.400"/><path d="M1 1.600h10v1.800h-10z" fill="#bdbdbd" stroke="none"/></svg><i style="font-size:12.6px;letter-spacing:-0.091px">68 tables</i></span></div>
  <div class="row" style="top:175.200px"><span class="st" style="left:0.0px"><svg viewBox="0 0 12 12" fill="#999"><path d="M.5.500h2.800v2.800h-2.800zM4.600.5h2.800v2.800h-2.800zM8.700.5h2.800v2.800h-2.800zM.5 4.600h2.800v2.800h-2.800zM4.600 4.600h2.800v2.800h-2.800zM8.700 4.600h2.800v2.800h-2.800zM.5 8.700h2.800v2.800h-2.800zM4.600 8.700h2.800v2.800h-2.800zM8.700 8.700h2.800v2.800h-2.800z"/></svg><i style="font-size:12.6px;letter-spacing:-0.246px">465 cols</i></span><span class="st" style="left:74.4px"><svg viewBox="0 0 12 12" fill="none" stroke="#8c8c8c"><circle cx="6" cy="6" r="3.600" stroke-width="1.500"/><circle cx="6" cy="6" r="1.200" stroke-width="1"/><path d="M6 .3v1.500M6 10.200v1.500M.3 6h1.500M10.200 6h1.500M2 2l1 1M9 9l1 1M2 10l1-1M9 3l1-1" stroke-width="1.600"/></svg><i style="font-size:12.6px;letter-spacing:-0.274px">10 procs</i></span></div>
  <div class="bar"><i style="width:24px;background:#8a4bbd"></i><i style="width:29px;background:#4a66c2"></i></div>
</div>
  
<div class="dcard" style="left:312px">
  <div class="tt" style="font-size:15px;letter-spacing:-0.454px">E-Commerce Operations</div><div class="dot"></div>
  <div class="chips"><div class="chip" style="width:94.0px"><svg viewBox="0 0 9 10" fill="#0d6efd"><ellipse cx="4.400" cy="3" rx="2.300" ry="2.750"/><path d="M.4 9.100 1.500 6.400Q2 5.300 3.100 5.300h2.600Q6.800 5.300 7.300 6.400L8.400 9.100z"/></svg><span style="font-size:13px;letter-spacing:-0.649px">Sarah Chen</span></div><div class="chip" style="width:106.1px"><svg viewBox="0 0 9 10" fill="#0d6efd"><ellipse cx="4.400" cy="3" rx="2.300" ry="2.750"/><path d="M.4 9.100 1.500 6.400Q2 5.300 3.100 5.300h2.600Q6.800 5.300 7.300 6.400L7.600 7.100 5.700 9.100z"/><path d="M4.300 7.400l1.300 1.200 2.700-2.600" fill="none" stroke="#e3effd" stroke-width="1.500"/><path d="M4.500 7.500l1.100 1.100 2.700-2.700" fill="none" stroke="#0d6efd" stroke-width=".9"/></svg><span style="font-size:13px;letter-spacing:-0.415px">Mike Johnson</span></div></div>
  <div class="desc"><span style="font-size:12.5px;letter-spacing:-0.112px">Manages all e-commerce business processes</span><br><span style="font-size:12.5px;letter-spacing:-0.016px">including customer acquisition, order...</span></div>
  <div class="sep"></div>
  <div class="row" style="top:147.200px"><span class="st" style="left:0.0px"><svg viewBox="0 0 12 12" fill="#999"><rect x="4.500" y=".5" width="3" height="3"/><rect x=".3" y="8.300" width="3" height="3"/><rect x="4.500" y="8.300" width="3" height="3"/><rect x="8.700" y="8.300" width="3" height="3"/><path d="M6 3.500v5M1.800 8.300v-2.300h8.400v2.300" fill="none" stroke="#999" stroke-width="1"/></svg><i style="font-size:12.6px;letter-spacing:-0.453px">5 areas</i></span><span class="st" style="left:69.4px"><svg viewBox="0 0 12 12" fill="none" stroke="#999" stroke-width="1"><path d="M2 .8h5.500l2.500 2.500v8h-8zM7.500.8v2.500h2.500"/><path d="M3.800 6h4.400M3.800 8.200h4.400" stroke-width=".9"/></svg><i style="font-size:12.6px;letter-spacing:-0.015px">57 terms</i></span><span class="st" style="left:146.5px"><svg viewBox="0 0 12 12" fill="none" stroke="#a0a0a0" stroke-width=".9"><rect x=".6" y="1.200" width="10.800" height="9.800"/><path d="M.6 3.600h10.800M.6 6.100h10.800M.6 8.600h10.800M4.200 3.600v7.400M7.800 3.600v7.400"/><path d="M1 1.600h10v1.800h-10z" fill="#bdbdbd" stroke="none"/></svg><i style="font-size:12.6px;letter-spacing:-0.354px">18 tables</i></span></div>
  <div class="row" style="top:175.200px"><span class="st" style="left:0.0px"><svg viewBox="0 0 12 12" fill="#999"><path d="M.5.500h2.800v2.800h-2.800zM4.600.5h2.800v2.800h-2.800zM8.700.5h2.800v2.800h-2.800zM.5 4.600h2.800v2.800h-2.800zM4.600 4.600h2.800v2.800h-2.800zM8.700 4.600h2.800v2.800h-2.800zM.5 8.700h2.800v2.800h-2.800zM4.600 8.700h2.800v2.800h-2.800zM8.700 8.700h2.800v2.800h-2.800z"/></svg><i style="font-size:12.6px;letter-spacing:-0.517px">163 cols</i></span><span class="st" style="left:72.6px"><svg viewBox="0 0 12 12" fill="none" stroke="#8c8c8c"><circle cx="6" cy="6" r="3.600" stroke-width="1.500"/><circle cx="6" cy="6" r="1.200" stroke-width="1"/><path d="M6 .3v1.500M6 10.200v1.500M.3 6h1.500M10.200 6h1.500M2 2l1 1M9 9l1 1M2 10l1-1M9 3l1-1" stroke-width="1.600"/></svg><i style="font-size:12.6px;letter-spacing:-0.402px">7 procs</i></span><span class="st" style="left:141.3px"><svg viewBox="0 0 12 12" fill="#8c8c8c"><path d="M8.600.6 2 6.800h3.400l-2.400 4.800 7.800-7h-3.600z"/></svg><i style="font-size:12.6px;letter-spacing:0.176px">3 triggers</i></span></div>
  <div class="bar"><i style="width:60px;background:#8a4bbd"></i><i style="width:19px;background:#4a66c2"></i></div>
</div>
  
<div class="dcard" style="left:610px">
  <div class="tt" style="font-size:15px;letter-spacing:-0.450px">Healthcare Services</div><div class="dot"></div>
  <div class="chips"><div class="chip" style="width:96.7px"><svg viewBox="0 0 9 10" fill="#0d6efd"><ellipse cx="4.400" cy="3" rx="2.300" ry="2.750"/><path d="M.4 9.100 1.500 6.400Q2 5.300 3.100 5.300h2.600Q6.800 5.300 7.300 6.400L8.400 9.100z"/></svg><span style="font-size:13px;letter-spacing:-0.168px">Nina Petrov</span></div><div class="chip" style="width:90.5px"><svg viewBox="0 0 9 10" fill="#0d6efd"><ellipse cx="4.400" cy="3" rx="2.300" ry="2.750"/><path d="M.4 9.100 1.500 6.400Q2 5.300 3.100 5.300h2.600Q6.800 5.300 7.300 6.400L7.600 7.100 5.700 9.100z"/><path d="M4.300 7.400l1.300 1.200 2.700-2.600" fill="none" stroke="#e3effd" stroke-width="1.500"/><path d="M4.500 7.500l1.100 1.100 2.700-2.700" fill="none" stroke="#0d6efd" stroke-width=".9"/></svg><span style="font-size:13px;letter-spacing:-0.555px">Ana Garcia</span></div></div>
  <div class="desc"><span style="font-size:12.5px;letter-spacing:-0.074px">Governs healthcare business operations</span><br><span style="font-size:12.5px;letter-spacing:-0.096px">covering patient management, clinical...</span></div>
  <div class="sep"></div>
  <div class="row" style="top:147.200px"><span class="st" style="left:0.0px"><svg viewBox="0 0 12 12" fill="#999"><rect x="4.500" y=".5" width="3" height="3"/><rect x=".3" y="8.300" width="3" height="3"/><rect x="4.500" y="8.300" width="3" height="3"/><rect x="8.700" y="8.300" width="3" height="3"/><path d="M6 3.500v5M1.800 8.300v-2.300h8.400v2.300" fill="none" stroke="#999" stroke-width="1"/></svg><i style="font-size:12.6px;letter-spacing:-0.486px">5 areas</i></span><span class="st" style="left:69.4px"><svg viewBox="0 0 12 12" fill="none" stroke="#999" stroke-width="1"><path d="M2 .8h5.500l2.500 2.500v8h-8zM7.500.8v2.500h2.500"/><path d="M3.800 6h4.400M3.800 8.200h4.400" stroke-width=".9"/></svg><i style="font-size:12.6px;letter-spacing:0.142px">53 terms</i></span><span class="st" style="left:147.3px"><svg viewBox="0 0 12 12" fill="none" stroke="#a0a0a0" stroke-width=".9"><rect x=".6" y="1.200" width="10.800" height="9.800"/><path d="M.6 3.600h10.800M.6 6.100h10.800M.6 8.600h10.800M4.200 3.600v7.400M7.800 3.600v7.400"/><path d="M1 1.600h10v1.800h-10z" fill="#bdbdbd" stroke="none"/></svg><i style="font-size:12.6px;letter-spacing:-0.329px">16 tables</i></span></div>
  <div class="row" style="top:175.200px"><span class="st" style="left:0.0px"><svg viewBox="0 0 12 12" fill="#999"><path d="M.5.500h2.800v2.800h-2.800zM4.600.5h2.800v2.800h-2.800zM8.700.5h2.800v2.800h-2.800zM.5 4.600h2.800v2.800h-2.800zM4.600 4.600h2.800v2.800h-2.800zM8.700 4.600h2.800v2.800h-2.800zM.5 8.700h2.800v2.800h-2.800zM4.600 8.700h2.800v2.800h-2.800zM8.700 8.700h2.800v2.800h-2.800z"/></svg><i style="font-size:12.6px;letter-spacing:-0.546px">148 cols</i></span><span class="st" style="left:72.5px"><svg viewBox="0 0 12 12" fill="none" stroke="#8c8c8c"><circle cx="6" cy="6" r="3.600" stroke-width="1.500"/><circle cx="6" cy="6" r="1.200" stroke-width="1"/><path d="M6 .3v1.500M6 10.200v1.500M.3 6h1.500M10.200 6h1.500M2 2l1 1M9 9l1 1M2 10l1-1M9 3l1-1" stroke-width="1.600"/></svg><i style="font-size:12.6px;letter-spacing:-0.402px">7 procs</i></span><span class="st" style="left:141.3px"><svg viewBox="0 0 12 12" fill="#8c8c8c"><path d="M8.600.6 2 6.800h3.400l-2.400 4.800 7.800-7h-3.600z"/></svg><i style="font-size:12.6px;letter-spacing:0.176px">3 triggers</i></span></div>
  <div class="bar"><i style="width:61px;background:#8a4bbd"></i><i style="width:18px;background:#4a66c2"></i></div>
</div>

  <div class="panel" style="top:404px;height:256px">
    <svg class="abs" style="left:16px;top:20.500px" width="12" height="12" viewBox="0 0 12 12"><path d="M5.700 1.400a4.900 4.900 0 1 0 4.900 4.900h-4.900z" fill="#555"/><path d="M6.500.7a4.700 4.700 0 0 1 4.700 4.700h-4.700z" fill="#fff" stroke="#666" stroke-width="1"/></svg>
    <div class="ph" style="top:19px;font-size:11.7px;letter-spacing:0.052px">ASSET DISTRIBUTION</div>
    <div class="dn" style="top:50px;font-size:12.8px;letter-spacing:-0.460px">AdventureWorks Enterprise</div>
    <div class="db" style="top:76px"><i style="width:24px;background:#8a4bbd"></i><i style="width:28px;background:#4a66c2"></i><i style="width:194px;background:#aaa"></i></div>
    <div class="dn" style="top:105px;font-size:12.8px;letter-spacing:-0.328px">E-Commerce Operations</div>
    <div class="db" style="top:131px"><i style="width:24px;background:#8a4bbd"></i><i style="width:7.300px;background:#4a66c2"></i><i style="width:68px;background:#aaa"></i></div>
    <div class="dn" style="top:160px;font-size:12.8px;letter-spacing:-0.348px">Healthcare Services</div>
    <div class="db" style="top:186px"><i style="width:22px;background:#8a4bbd"></i><i style="width:7px;background:#4a66c2"></i><i style="width:61px;background:#aaa"></i></div>
    <div class="lg" style="left:17px;font-size:10.5px;letter-spacing:-0.011px"><b style="background:#8a4bbd"></b>Terms</div>
    <div class="lg" style="left:70px;font-size:10.5px;letter-spacing:-0.362px"><b style="background:#4a66c2"></b>Tables</div>
    <div class="lg" style="left:122.600px;font-size:10.5px;letter-spacing:-0.032px"><b style="background:#aaa"></b>Columns</div>
  </div>
  <div class="panel" style="top:677px;height:114px">
    <svg class="abs" style="left:18px;top:20px" width="11" height="12" viewBox="0 0 11 12" fill="#555"><circle cx="5" cy="3" r="2.600"/><path d="M.3 11.500v-2a3 3 0 0 1 3-3h3.400a3 3 0 0 1 1.500.4l-3.200 3.400-1-1-1 1 2 2z"/><path d="M5.500 11l4.500-4.500.8.800-4.500 4.500z"/></svg>
    <div class="ph" style="top:19px;font-size:11.7px;letter-spacing:0.223px">STEWARDSHIP</div>
    <div class="sw" style="top:50px"><span style="font-size:13px;letter-spacing:-0.310px">Owners</span><i></i><b>3/3</b></div>
    <div class="sw" style="top:78px"><span style="font-size:13px;letter-spacing:-0.107px">Stewards</span><i></i><b>3/3</b></div>
  </div>

  <div class="hline" style="top:823px"></div>
  <div class="exp" style="font-size:12px;letter-spacing:0.102px">EXPLORE</div>
  <div class="echip" style="left:86px;width:142px"><svg width="9" height="11" viewBox="0 0 9 11" fill="#aaa"><path d="M.5.500h6l2 2v8h-8z"/></svg><span style="font-size:12.5px;letter-spacing:-0.157px">Business Glossary</span></div>
  <div class="echip" style="left:240px;width:116px"><svg width="9" height="11" viewBox="0 0 9 11" fill="#aaa"><ellipse cx="4.500" cy="2" rx="4" ry="1.500"/><path d="M.5 3.500h8v2h-8zM.5 6.500h8v2h-8z"/></svg><span style="font-size:12.5px;letter-spacing:0.213px">Data Catalog</span></div>
  <div class="tip" style="left:998px;font-size:12.5px;letter-spacing:-0.200px">Tip: Press</div><div class="tipk">Ctrl+K</div><div class="tip" style="left:1097.500px;font-size:12.5px;letter-spacing:-0.052px">to search</div>
  <div id="fab"></div>
</div>

</body>
</html>
